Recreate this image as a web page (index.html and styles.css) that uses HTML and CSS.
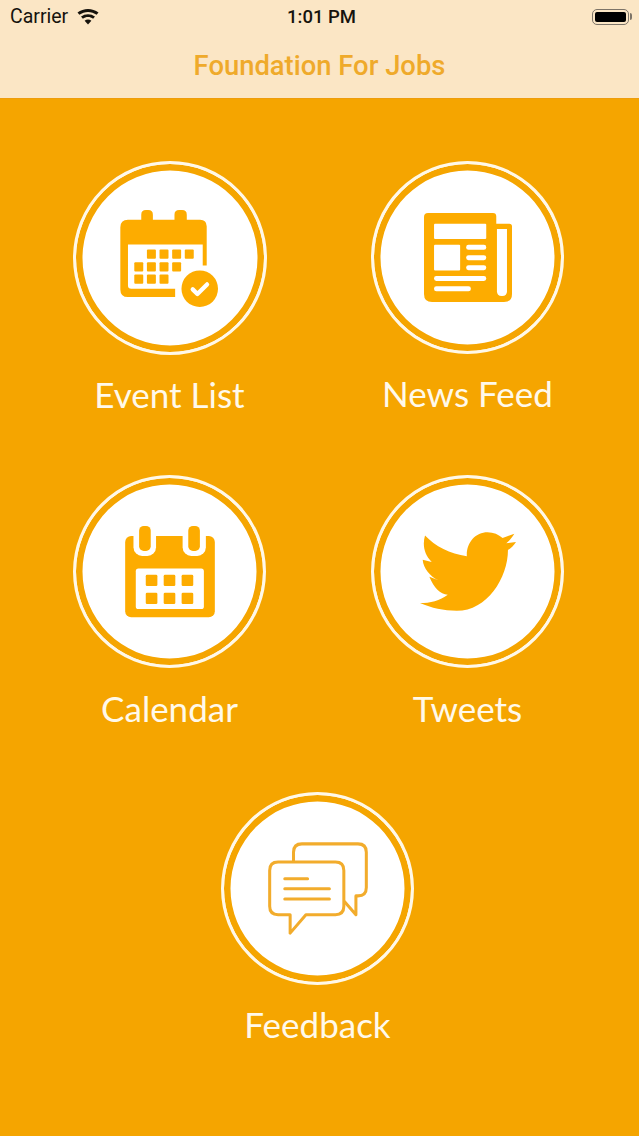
FILE: index.html
```html
<!doctype html>
<html lang="en">
<head>
	<meta charset="UTF-8" />
	<title>Foundation For Jobs</title>
	<link rel="stylesheet" href="styles.css">
</head>
<body>
	<header class="top">
		<div class="status">
			<div class="status-left">
				<span class="carrier">Carrier</span>
				<svg class="wifi" viewBox="0 0 22 16" width="22" height="16">
					<path d="M11 15.6 L7.6 11.7 C9.6 10 12.4 10 14.4 11.7 Z"/>
					<path d="M5.9 9.8 L4 7.6 C7.9 4.3 14.1 4.3 18 7.6 L16.1 9.8 C13.2 7.4 8.8 7.4 5.9 9.8 Z"/>
					<path d="M2.4 5.8 L.5 3.6 C6.4 -1.2 15.6 -1.2 21.5 3.6 L19.6 5.8 C14.7 1.9 7.3 1.9 2.4 5.8 Z"/>
				</svg>
			</div>
			<span class="time">1:01 PM</span>
			<div class="battery"><i></i></div>
		</div>
		<h1 class="title">Foundation For Jobs</h1>
	</header>

	<main class="menu">
		<a class="tile tile-big" href="javascript:;">
			<span class="ring">
				<svg class="icon" width="99" height="97" viewBox="182 178 296 292">
					<path d="M205 207 H245 V192 Q245 178 259 178 H266 Q280 178 280 192 V207 H345 V192 Q345 178 359 178 H368 Q382 178 382 192 V207 H422 Q442 207 442 227 V345 H430 V282 H205 V405 Q205 415 215 415 H347 V440 H205 Q182 440 182 417 V230 Q182 207 205 207 Z"/>
					<g class="cells">
						<rect x="262" y="297" width="27" height="28" rx="3"/>
						<rect x="300" y="297" width="27" height="28" rx="3"/>
						<rect x="338" y="297" width="27" height="28" rx="3"/>
						<rect x="376" y="297" width="27" height="28" rx="3"/>
						<rect x="224" y="335" width="27" height="28" rx="3"/>
						<rect x="262" y="335" width="27" height="28" rx="3"/>
						<rect x="300" y="335" width="27" height="28" rx="3"/>
						<rect x="338" y="335" width="27" height="28" rx="3"/>
						<rect x="224" y="372" width="27" height="28" rx="3"/>
						<rect x="262" y="372" width="27" height="28" rx="3"/>
						<rect x="300" y="372" width="27" height="28" rx="3"/>
					</g>
					<circle cx="421" cy="415" r="55"/>
					<path class="tick" d="M400 417 L414 431 L443 402"/>
				</svg>
			</span>
			<span class="label">Event List</span>
		</a>

		<a class="tile" href="javascript:;">
			<span class="ring">
				<svg class="icon" width="88" height="89" viewBox="192 190 263 266">
					<path d="M204 190 H398 Q408 190 408 200 V222 H447 Q455 222 455 230 V432 Q455 456 431 456 H216 Q192 456 192 432 V202 Q192 190 204 190 Z"/>
					<g class="cut">
						<path d="M410 238 H440 V424 Q440 438 426 438 H424 Q410 438 410 424 Z"/>
						<rect x="222" y="222" width="156" height="46" rx="3"/>
						<rect x="222" y="285" width="78" height="77" rx="3"/>
						<rect x="318" y="285" width="60" height="15" rx="7"/>
						<rect x="318" y="316" width="60" height="15" rx="7"/>
						<rect x="318" y="346" width="60" height="15" rx="7"/>
						<rect x="222" y="378" width="156" height="15" rx="7"/>
						<rect x="222" y="409" width="110" height="15" rx="7"/>
					</g>
				</svg>
			</span>
			<span class="label">News Feed</span>
		</a>

		<a class="tile tile-low" href="javascript:;">
			<span class="ring">
				<svg class="icon" width="90" height="92" viewBox="195 183 270 277">
					<rect x="195" y="213" width="270" height="245" rx="18"/>
					<g class="cut">
						<rect x="220" y="170" width="68" height="103" rx="26"/>
						<rect x="368" y="170" width="70" height="103" rx="26"/>
						<rect x="227" y="311" width="205" height="122" rx="8"/>
					</g>
					<rect x="237" y="183" width="35" height="75" rx="14"/>
					<rect x="385" y="183" width="35" height="75" rx="14"/>
					<rect x="257" y="330" width="35" height="34" rx="4"/>
					<rect x="311" y="330" width="35" height="34" rx="4"/>
					<rect x="365" y="330" width="35" height="34" rx="4"/>
					<rect x="257" y="384" width="35" height="34" rx="4"/>
					<rect x="311" y="384" width="35" height="34" rx="4"/>
					<rect x="365" y="384" width="35" height="34" rx="4"/>
				</svg>
			</span>
			<span class="label">Calendar</span>
		</a>

		<a class="tile tile-low" href="javascript:;">
			<span class="ring">
				<svg class="icon" width="96" height="79" viewBox="180 203 287 235">
					<path d="M195 213 C225 245 270 268 320 275 C318 235 345 203 382 203 C400 203 415 210 427 220 L462 208 C455 220 448 228 438 236 L467 232 C460 243 452 250 443 256 C443 340 380 438 290 438 C250 438 215 430 180 415 C210 415 240 408 263 390 C240 388 222 370 208 336 L235 347 C210 335 190 310 188 285 L215 292 C192 270 187 240 195 213 Z"/>
				</svg>
			</span>
			<span class="label">Tweets</span>
		</a>

		<a class="tile tile-wide" href="javascript:;">
			<span class="ring">
				<svg class="icon icon-line" width="100" height="93" viewBox="172 187 298 276">
					<path d="M248 243 V217 Q248 192 273 192 H440 Q465 192 465 217 V322 Q465 347 440 347 H434 V403 L401 365"/>
					<path d="M202 246 H373 Q398 246 398 271 V378 Q398 403 373 403 H285 L238 458 V403 H202 Q177 403 177 378 V271 Q177 246 202 246 Z"/>
					<path d="M222 296 H290 M222 326 H355 M222 356 H355"/>
				</svg>
			</span>
			<span class="label">Feedback</span>
		</a>
	</main>
</body>
</html>
```

FILE: styles.css
```css
*{
	margin: 0;
	padding: 0;
	box-sizing: border-box;
}
body{
	background: #f5a500;
	font-family: Lato, "Liberation Sans", sans-serif;
}

/* status bar + title */
.top{
	height: 99px;
	background: #fbe6c5;
	border-bottom: 1px solid #ee9d0c;
}
.status{
	display: grid;
	grid-template-columns: 1fr auto 1fr;
	align-items: center;
	height: 33px;
	padding: 0 8px 0 10px;
	font-family: Roboto, "Liberation Sans", sans-serif;
	color: #16130d;
}
.status-left{
	display: flex;
	align-items: center;
	gap: 9px;
}
.carrier{
	font-size: 19.5px;
}
.wifi{
	fill: #16130d;
}
.time{
	margin-left: 2px;
	font-size: 18.5px;
	font-weight: 500;
}
.battery{
	position: relative;
	justify-self: end;
	width: 37px;
	height: 16px;
	margin-right: 2px;
	padding: 2px;
	border: 1.5px solid #7d7468;
	border-radius: 5px;
}
.battery::after{
	content: "";
	position: absolute;
	top: 3px;
	right: -4px;
	width: 2px;
	height: 7px;
	background: #7d7468;
	border-radius: 0 2px 2px 0;
}
.battery i{
	display: block;
	height: 100%;
	background: #000;
	border-radius: 2px;
}
.title{
	margin-top: 4px;
	font-family: Roboto, "Liberation Sans", sans-serif;
	font-size: 27.4px;
	font-weight: 500;
	line-height: 58px;
	text-align: center;
	color: #efaa2b;
}

/* menu */
.menu{
	display: grid;
	grid-template-columns: 298px 298px;
	justify-content: start;
	padding: 62px 0 0 20.5px;
	row-gap: 59px;
}
.tile{
	display: flex;
	flex-direction: column;
	align-items: center;
	gap: 17px;
	text-decoration: none;
}
.tile-low{
	gap: 18px;
}
.tile-wide{
	grid-column: 1 / 3;
	margin: 3px 2px 0 0;
}
.ring{
	display: flex;
	align-items: center;
	justify-content: center;
	width: 193px;
	height: 193px;
	border: 3.5px solid #fff8e8;
	border-radius: 50%;
	background: #fff;
	box-shadow: inset 0 0 0 6.5px #f5a500;
}
.tile-big .ring{
	width: 194px;
	height: 194px;
}
.icon{
	fill: #fdac00;
}
.cells rect{
	fill: #fdac00;
}
.cut{
	fill: #fff;
}
.tick{
	fill: none;
	stroke: #fff;
	stroke-width: 13;
	stroke-linecap: round;
	stroke-linejoin: round;
}
.icon-line{
	fill: none;
	stroke: #f2ac2c;
	stroke-width: 9;
	stroke-linecap: round;
	stroke-linejoin: round;
}
.label{
	font-size: 35px;
	line-height: 44px;
	color: #fff9ea;
}
```
